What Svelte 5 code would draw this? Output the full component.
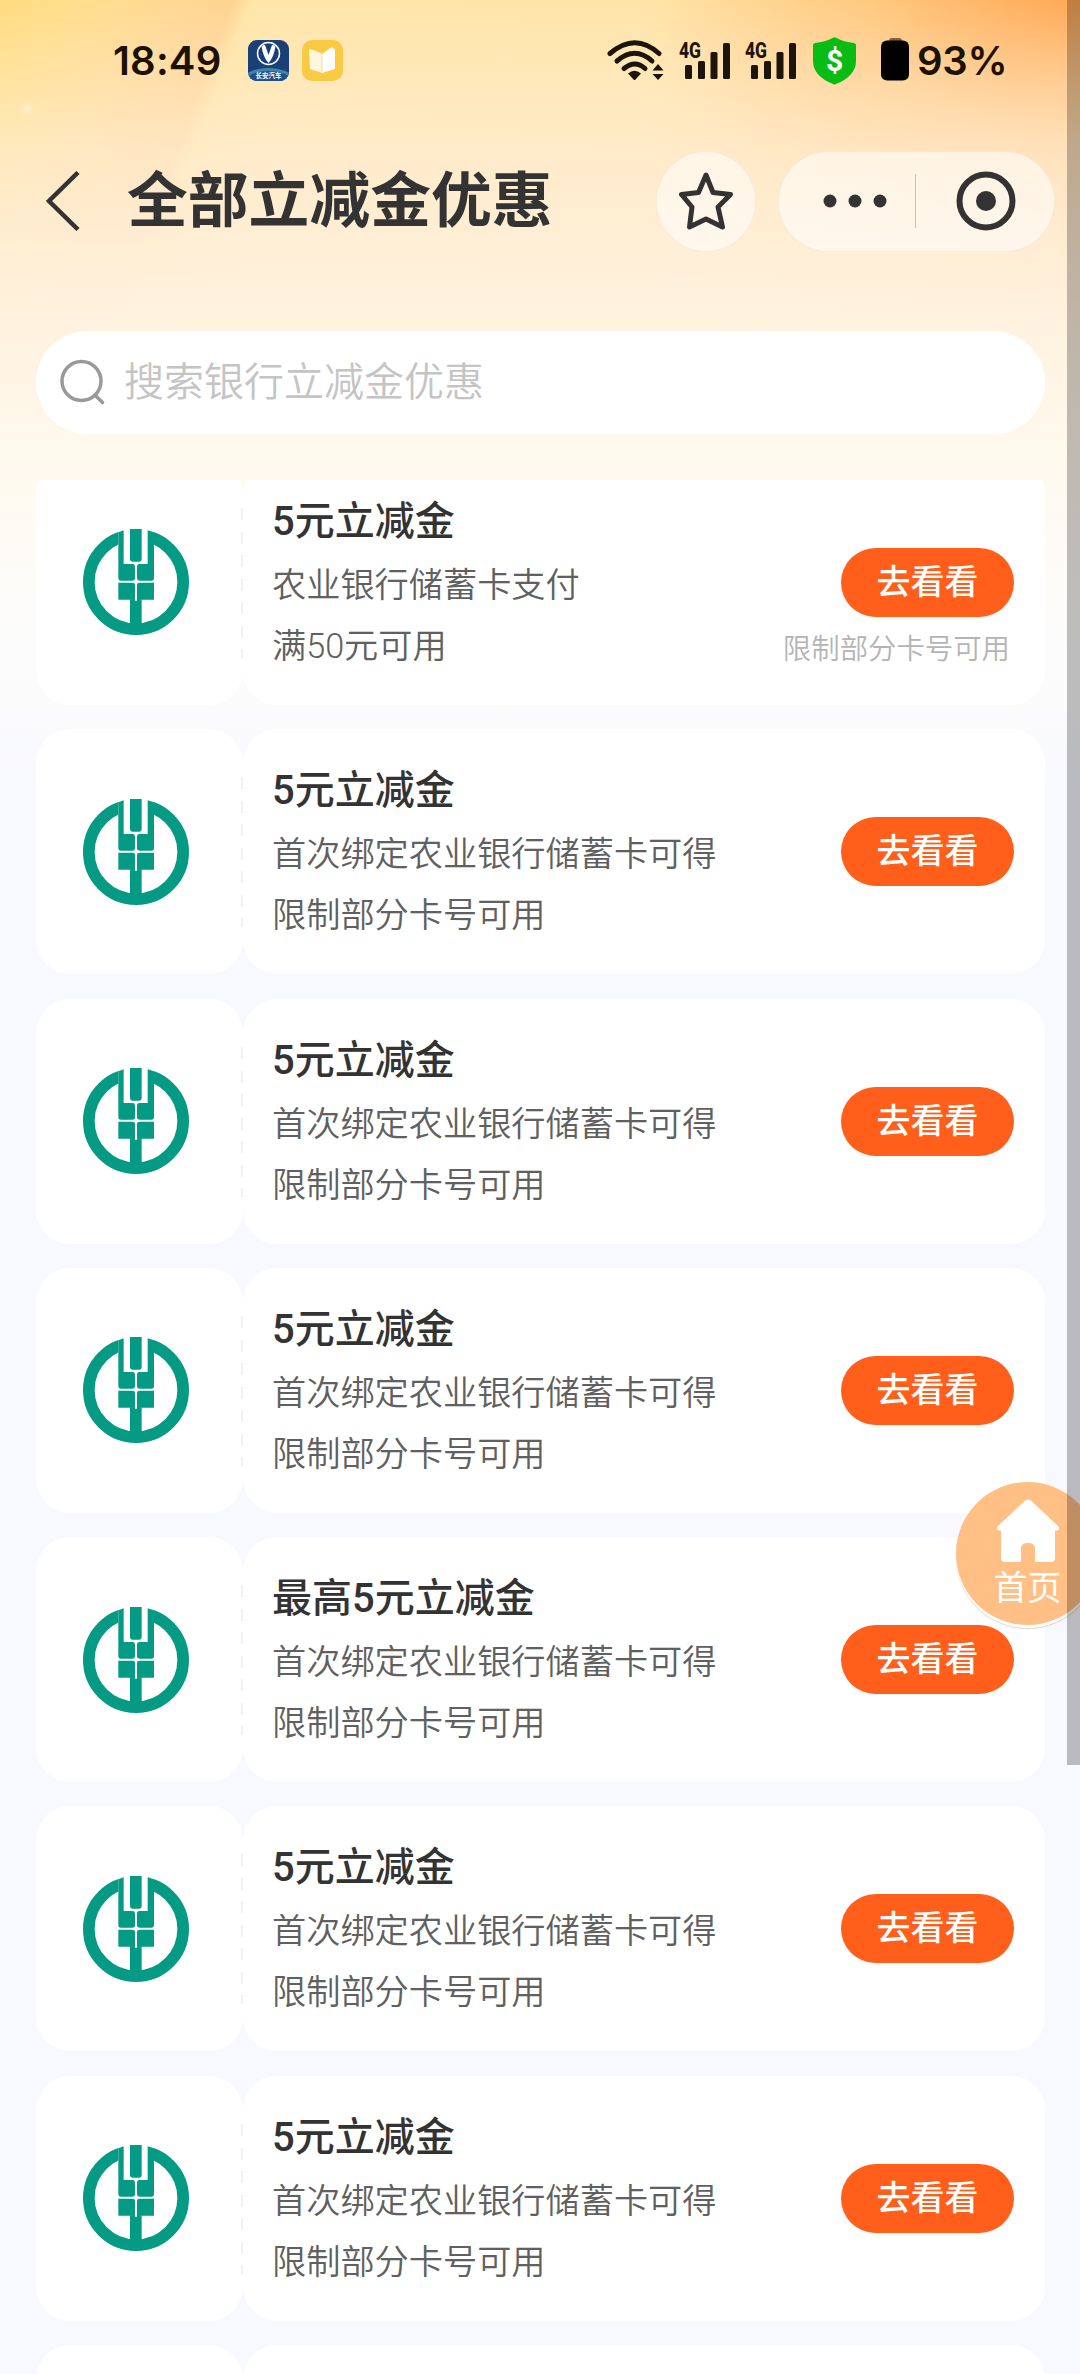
<script lang="ts">
    type Coupon = {
        title: string,
        lines: string[],
        note?: string
    };

    const bindLines = ["首次绑定农业银行储蓄卡可得", "限制部分卡号可用"];

    const coupons: Coupon[] = [
        { title: "5元立减金", lines: ["农业银行储蓄卡支付", "满50元可用"], note: "限制部分卡号可用" },
        { title: "5元立减金", lines: bindLines },
        { title: "5元立减金", lines: bindLines },
        { title: "5元立减金", lines: bindLines },
        { title: "最高5元立减金", lines: bindLines },
        { title: "5元立减金", lines: bindLines },
        { title: "5元立减金", lines: bindLines }
    ];

    let keyword = $state("");
</script>

{#snippet signal()}
    <svg class="signal" width="52" height="40" viewBox="0 0 52 40">
        <text class="net" x="0" y="17" textLength="22" lengthAdjust="spacingAndGlyphs">4G</text>
        <rect x="6" y="24" width="7" height="14" rx="1.5" />
        <rect x="19" y="20" width="7" height="18" rx="1.5" />
        <rect x="31.5" y="11" width="7" height="27" rx="1.5" />
        <rect x="44" y="2" width="7" height="36" rx="1.5" />
    </svg>
{/snippet}

{#snippet bankLogo()}
    <svg class="logo" viewBox="0 0 318 318">
        <circle cx="159" cy="159" r="141.5" fill="none" stroke="#059a83" stroke-width="35" />
        <rect x="106" y="0" width="107" height="120" fill="#fff" />
        <path fill="#059a83" d="M122 4V105H150Q156 105 156 113V148Q156 155 148 155H114Q106 155 106 148V10Z" />
        <path fill="#059a83" d="M194 4V105H169Q162 105 162 113V148Q162 155 171 155H205Q213 155 213 148V10Z" />
        <path fill="#059a83" d="M106 161H148Q156 161 156 168V212H106ZM213 161H171Q162 161 162 168V212H213Z" />
        <path fill="#059a83" d="M141 0H176V91Q176 98 169 98H148Q141 98 141 91ZM141 211H156V215H162V211H176V300H141Z" />
    </svg>
{/snippet}

<div class="page">
    <header class="status_bar">
        <span class="time">18:49</span>
        <svg class="app_icon" width="41" height="41" viewBox="0 0 41 41">
            <defs>
                <clipPath id="app_clip"><rect width="41" height="41" rx="9" /></clipPath>
            </defs>
            <g clip-path="url(#app_clip)">
                <rect width="41" height="41" fill="#1b4078" />
                <ellipse cx="20.500" cy="41" rx="26" ry="13" fill="#3c83ad" />
                <ellipse cx="20.500" cy="45" rx="26" ry="14" fill="#214f85" />
            </g>
            <circle cx="20.500" cy="13.500" r="11" fill="none" stroke="#fff" stroke-width="1.500" />
            <path fill="#fff" d="M13.500 6Q15 5 17 5L20.500 15L24 5Q26 5 27.500 6Q26 17 20.500 23Q15 17 13.500 6Z" />
            <text class="app_name" x="20.500" y="38.300" text-anchor="middle">长安汽车</text>
        </svg>
        <svg class="app_icon" width="41" height="41" viewBox="0 0 41 41">
            <rect width="41" height="41" rx="10" fill="#f9cb45" />
            <path fill="#fff6e0" d="M7 9L14 11L20 14V33L8 29Z" />
            <path fill="#fff" d="M20 14L30 7L33 10V29L20 33Z" />
            <path d="M20 14V33" stroke="#f3e3b8" stroke-width="1.200" />
        </svg>

        <div class="status_right">
            <svg width="58" height="42" viewBox="0 0 58 42">
                <g fill="none" stroke="#1c150b" stroke-width="5" stroke-linecap="round">
                    <path d="M3 13.500Q28 -8 52 13.500" />
                    <path d="M10 21Q28 5.500 45 21" />
                    <path d="M17 28.500Q28 19.500 38 28.500" />
                </g>
                <path fill="#1c150b" d="M21 33.500Q27.500 28 34 33.500L28.500 39.500Q27.500 40.500 26.500 39.500ZM45.500 30.500L51 24L56.500 30.500ZM45.500 34L51 40L56.500 34Z" />
            </svg>
            {@render signal()}
            {@render signal()}
            <svg class="shield" width="43" height="48" viewBox="0 0 43 48">
                <path fill="#08bc14" d="M20 .700Q21.500 0 23 .700Q31 5 41 6Q43 6.500 43 8V24Q43 39 23 47Q21.500 48 20 47Q0 39 0 24V8Q0 6.500 2 6Q12 5 20 .700Z" />
                <text class="dollar" x="21.500" y="34" text-anchor="middle">$</text>
            </svg>
            <svg class="battery" width="28" height="43" viewBox="0 0 28 43">
                <rect x="8" y="0" width="13" height="8" rx="3" fill="#8b6036" />
                <rect x="0" y="2.500" width="28" height="40" rx="6" fill="#000" />
            </svg>
            <span class="percent">93%</span>
        </div>
    </header>

    <nav class="title_bar">
        <svg class="back" width="36" height="60" viewBox="0 0 36 60">
            <path d="M33 1.500L4 30L33 58.500" fill="none" stroke="#333" stroke-width="4.500" />
        </svg>
        <h1>全部立减金优惠</h1>
        <button class="star" aria-label="收藏">
            <svg width="54" height="58" viewBox="0 0 54 58">
                <path d="M27 3L34 20.500L51.500 22.500L39 35L43.500 55L27 47L10.500 55L13 35L2.500 22.500L19.500 20.500Z" fill="none" stroke="#333" stroke-width="5" stroke-linejoin="round" />
            </svg>
        </button>
        <div class="capsule">
            <svg class="dots" width="64" height="14" viewBox="0 0 64 14">
                <circle cx="7" cy="7" r="6.500" />
                <circle cx="32" cy="7" r="6.500" />
                <circle cx="57" cy="7" r="6.500" />
            </svg>
            <span class="divider"></span>
            <svg class="target" width="60" height="60" viewBox="0 0 60 60">
                <circle cx="30" cy="30" r="26.500" fill="none" stroke="#333" stroke-width="6" />
                <circle cx="30" cy="30" r="10" fill="#333" />
            </svg>
        </div>
    </nav>

    <label class="search">
        <svg width="48" height="48" viewBox="0 0 48 48" fill="none" stroke="#999" stroke-width="3.500" stroke-linecap="round">
            <circle cx="22.500" cy="22" r="19.500" />
            <path d="M37 37L43.500 43.500" />
        </svg>
        <input placeholder="搜索银行立减金优惠" bind:value={keyword} />
    </label>

    <main class="list">
        {#each coupons as coupon}
            <article class="coupon">
                <div class="bank">{@render bankLogo()}</div>
                <div class="detail">
                    <div class="info">
                        <h2>{coupon.title}</h2>
                        {#each coupon.lines as line}
                            <p>{line}</p>
                        {/each}
                    </div>
                    <div class="action">
                        <button class="go">去看看</button>
                        {#if coupon.note}
                            <span class="note">{coupon.note}</span>
                        {/if}
                    </div>
                </div>
            </article>
        {/each}
        <!-- next page of coupons, still loading -->
        <article class="coupon">
            <div class="bank"></div>
            <div class="detail"></div>
        </article>
    </main>

    <div class="home">
        <svg width="64" height="64" viewBox="0 0 64 64">
            <path fill="#fff" d="M28.500 2Q32 -1 35.500 2L62 27Q65 31.500 60 31.500H59V59Q59 63 55 63H39V50Q39 44 33 44H31Q25 44 25 50V63H9Q5 63 5 59V31.500H4Q-1 31.500 2 27Z" />
        </svg>
        <span>首页</span>
    </div>
    <div class="scrollbar"></div>
</div>

<style>
    :global(body) {
        background-color: #f8f9fe;
    }

    .page {
        position: relative;
        width: 1080px;
        height: 2374px;
        overflow: hidden;
        color: #333;
        font-family: Roboto, "Noto Sans CJK SC", sans-serif;
        background:
            radial-gradient(circle 7px at 27px 109px, rgba(255, 240, 215, 0.9), transparent),
            linear-gradient(180deg, transparent 0, rgba(255, 238, 216, 0.7) 150px, rgba(255, 240, 220, 0.93) 260px, #fff5e6 380px, #fffaf0 480px, #fdfcfb 620px, #fbfbfc 710px, #f8f9fe 790px),
            radial-gradient(ellipse 420px 300px at 1080px 0, #ffa855, rgba(255, 188, 110, 0.55) 50%, transparent),
            linear-gradient(111deg, rgba(255, 208, 135, 0) 60px, rgba(255, 205, 140, 0.75) 218px, rgba(255, 208, 140, 0) 234px),
            linear-gradient(90deg, #ffdc80, #ffe5a8 260px, #ffe4a8 640px, #ffcf8a);
    }

    button {
        border: 0;
        padding: 0;
        font-family: inherit;
    }

    svg {
        display: block;
        flex: none;
    }

    .status_bar {
        display: flex;
        align-items: center;
        box-sizing: border-box;
        height: 121px;
        padding: 0 73px 0 113px;
        color: #1c1204;
    }

    .time {
        width: 135px;
        font: 600 40px/1 Inter, sans-serif;
        letter-spacing: 0.2px;
    }

    .app_icon {
        margin-right: 13px;
    }

    .app_name {
        fill: #fff;
        font: 700 6.500px "Noto Sans CJK SC", sans-serif;
    }

    .status_right {
        display: flex;
        align-items: center;
        margin-left: auto;
    }

    .signal {
        overflow: visible;
        margin-left: 14px;
        fill: #1c150b;
    }

    .net {
        font: 800 22px Roboto, sans-serif;
    }

    .shield {
        margin-left: 16px;
    }

    .dollar {
        fill: #fff;
        font: 700 30px Roboto, sans-serif;
    }

    .battery {
        margin: -3px 8px 0 25px;
    }

    .percent {
        width: 90px;
        white-space: nowrap;
        font: 600 40px/1 Inter, sans-serif;
        letter-spacing: -0.3px;
    }

    .title_bar {
        display: flex;
        align-items: center;
        height: 160px;
        padding-left: 45px;
    }

    h1 {
        flex: 1;
        margin: 2px 0 0 46px;
        font-size: 60.800px;
        font-weight: 700;
        line-height: 80px;
        white-space: nowrap;
    }

    .star, .capsule {
        display: flex;
        align-items: center;
        box-sizing: border-box;
        height: 101px;
        border: 1px solid rgba(120, 90, 40, 0.07);
        background-color: rgba(255, 255, 255, 0.55);
    }

    .star {
        justify-content: center;
        width: 100px;
        border-radius: 50%;
    }

    .capsule {
        width: 277px;
        margin: 0 25px 0 22px;
        padding-left: 44px;
        border-radius: 51px;
    }

    .dots {
        fill: #333;
    }

    .divider {
        width: 1px;
        height: 54px;
        margin: 0 40px 0 28px;
        background-color: #c9c2b8;
    }

    .search {
        display: flex;
        align-items: center;
        box-sizing: border-box;
        width: 1009px;
        height: 103px;
        margin: 50px 0 0 36px;
        padding-left: 23px;
        border-radius: 52px;
        background-color: #fff;
    }

    .search input {
        flex: 1;
        margin-left: 17px;
        padding: 0;
        border: 0;
        outline: 0;
        background: none;
        font-family: inherit;
        font-size: 40px;
        font-weight: 350;
        line-height: 60px;
    }

    .search input::placeholder {
        color: #c4c4c4;
        opacity: 1;
    }

    .list {
        display: flex;
        flex-direction: column;
        justify-content: flex-end;
        gap: 24.300px;
        height: 2110px;
        margin-top: 46px;
        overflow: hidden;
    }

    .coupon {
        display: flex;
        flex: none;
        width: 1009px;
        height: 245px;
        margin-left: 36px;
    }

    .bank, .detail {
        display: flex;
        align-items: center;
        box-sizing: border-box;
        border-radius: 34px;
        background-color: #fff;
    }

    .bank {
        position: relative;
        width: 207px;
        padding-left: 47px;
    }

    .bank::after {
        content: "";
        position: absolute;
        top: 48px;
        right: 0;
        width: 2px;
        height: 150px;
        background: repeating-linear-gradient(#f1f1f3 0 12px, transparent 12px 23.500px);
    }

    .logo {
        width: 106px;
        height: 106px;
    }

    .detail {
        flex: 1;
        justify-content: space-between;
        padding: 4px 31px 4px 29px;
    }

    h2 {
        margin: 4px 0 3px;
        font-size: 40px;
        font-weight: 500;
        line-height: 60px;
    }

    .info p {
        margin: 0;
        color: #606060;
        font-size: 34.200px;
        font-weight: 350;
        line-height: 61px;
    }

    .action {
        position: relative;
    }

    .go {
        display: block;
        width: 173px;
        height: 69px;
        border-radius: 35px;
        background-color: #ff5f1a;
        color: #fff;
        font-size: 34px;
        font-weight: 500;
        line-height: 67px;
    }

    .note {
        position: absolute;
        top: 81px;
        right: 4px;
        color: #b4b4b4;
        font-size: 28.400px;
        font-weight: 350;
        line-height: 42px;
        white-space: nowrap;
    }

    .home {
        position: absolute;
        top: 1482px;
        left: 956px;
        display: flex;
        flex-direction: column;
        align-items: center;
        box-sizing: border-box;
        width: 143px;
        height: 143px;
        padding-top: 17px;
        border-radius: 50%;
        background-color: #ffbf85;
        box-shadow: 0 3px 0 #fff, 0 4px 1px rgba(150, 120, 100, 0.3);
        color: #fff;
        font-size: 34px;
        line-height: 51px;
    }

    .scrollbar {
        position: absolute;
        top: 0;
        right: 0;
        width: 13px;
        height: 1765px;
        background-color: rgba(0, 0, 0, 0.25);
    }
</style>
